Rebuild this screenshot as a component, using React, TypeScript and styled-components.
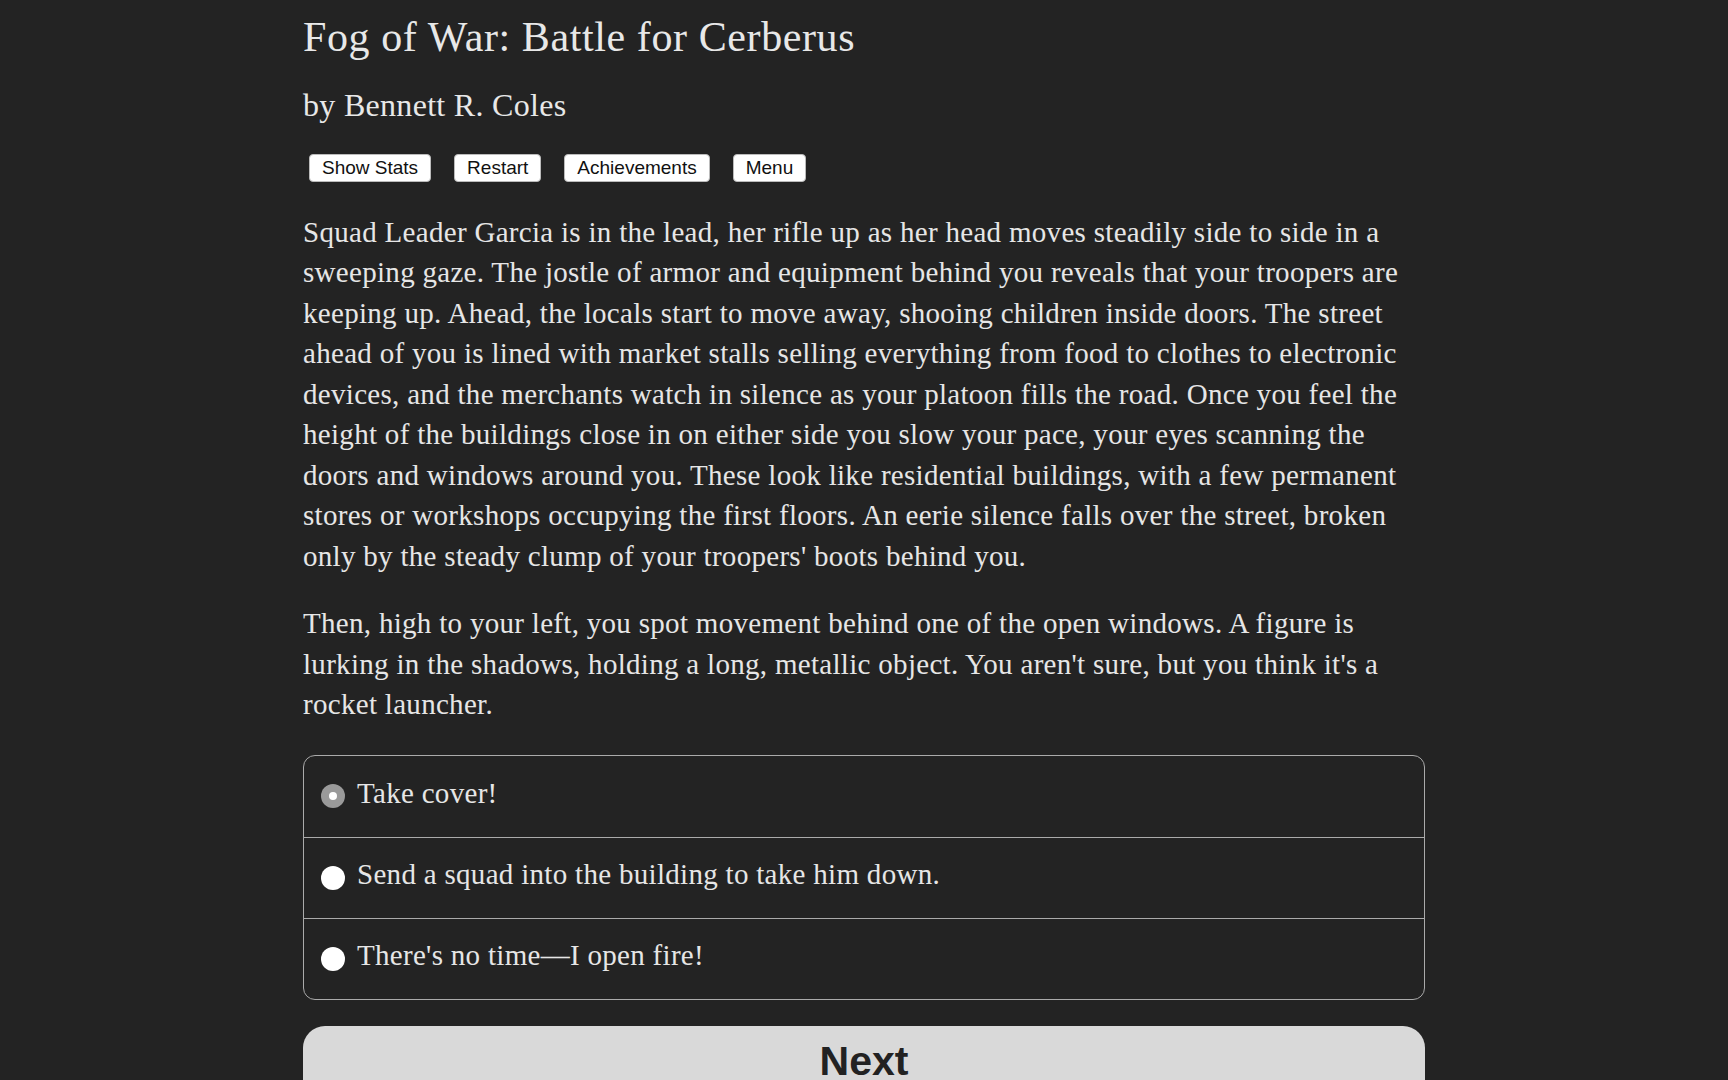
import React from "react";
import styled, { createGlobalStyle } from "styled-components";

const Global = createGlobalStyle`
  html, body { margin: 0; padding: 0; background: #232323; }
  body { font-family: "Liberation Serif", "DejaVu Serif", serif; color: #e6e6e6; }
`;

const Page = styled.main`
  width: 1122px;
  margin: 0 auto;
  padding-top: 12px;
`;

const Title = styled.h1`
  font-size: 42px;
  letter-spacing: 0.6px;
  font-weight: normal;
  line-height: 1.2;
  margin: 0;
  color: #e8e8e8;
`;

const Author = styled.h2`
  font-size: 32px;
  letter-spacing: 0.3px;
  font-weight: normal;
  line-height: 1.2;
  margin: 24px 0 0;
  color: #e8e8e8;
`;

const Toolbar = styled.div`
  display: flex;
  gap: 23px;
  margin: 29px 0 0 6px;
`;

const ToolButton = styled.button`
  font-family: "Liberation Sans", Arial, sans-serif;
  font-size: 19px;
  height: 28px;
  padding: 0 12px;
  background: #fff;
  color: #111;
  border: 1px solid #bbb;
  border-radius: 4px;
`;

const Story = styled.div`
  margin-top: 30px;
`;

const Text = styled.p`
  font-size: 29px;
  letter-spacing: 0.3px;
  line-height: 40.5px;
  margin: 0 0 27px;
`;

const Choices = styled.div`
  margin-top: 30px;
  border: 1.5px solid #aaa;
  border-radius: 12px;
  overflow: hidden;
`;

const Choice = styled.label<{ $first?: boolean }>`
  display: flex;
  align-items: center;
  height: 81px;
  padding: 0 16px 0 17px;
  gap: 12px;
  font-size: 29px;
  letter-spacing: 0.3px;
  border-top: ${(p) => (p.$first ? "none" : "1.5px solid #aaa")};
  box-sizing: border-box;
`;

const Radio = styled.span<{ $checked?: boolean }>`
  width: 24px;
  height: 24px;
  border-radius: 50%;
  flex: none;
  background: ${(p) => (p.$checked ? "#9a9a9a" : "#fff")};
  display: flex;
  align-items: center;
  justify-content: center;
  &::after {
    content: "";
    width: 8px;
    height: 8px;
    border-radius: 50%;
    background: #fff;
    display: ${(p) => (p.$checked ? "block" : "none")};
  }
`;

const ChoiceText = styled.span`
  margin-top: -6px;
`;

const NextButton = styled.button`
  display: block;
  width: 100%;
  margin-top: 26px;
  height: 80px;
  background: #d9d9d9;
  border: none;
  border-radius: 22px;
  font-family: "Liberation Sans", Arial, sans-serif;
  font-weight: bold;
  font-size: 41px;
  color: #222;
  padding: 0 0 8px;
`;

export default function App() {
  return (
    <>
      <Global />
      <Page>
        <Title>Fog of War: Battle for Cerberus</Title>
        <Author>by Bennett R. Coles</Author>
        <Toolbar>
          <ToolButton>Show Stats</ToolButton>
          <ToolButton>Restart</ToolButton>
          <ToolButton>Achievements</ToolButton>
          <ToolButton>Menu</ToolButton>
        </Toolbar>
        <Story>
          <Text>
            Squad Leader Garcia is in the lead, her rifle up as her head moves steadily side to side in a sweeping gaze. The jostle of armor and equipment behind you reveals that your troopers are keeping up. Ahead, the locals start to move away, shooing children inside doors. The street ahead of you is lined with market stalls selling everything from food to clothes to electronic devices, and the merchants watch in silence as your platoon fills the road. Once you feel the height of the buildings close in on either side you slow your pace, your eyes scanning the doors and windows around you. These look like residential buildings, with a few permanent stores or workshops occupying the first floors. An eerie silence falls over the street, broken only by the steady clump of your troopers' boots behind you.
          </Text>
          <Text>
            Then, high to your left, you spot movement behind one of the open windows. A figure is lurking in the shadows, holding a long, metallic object. You aren't sure, but you think it's a rocket launcher.
          </Text>
        </Story>
        <Choices>
          <Choice $first>
            <Radio $checked />
            <ChoiceText>Take cover!</ChoiceText>
          </Choice>
          <Choice>
            <Radio />
            <ChoiceText>Send a squad into the building to take him down.</ChoiceText>
          </Choice>
          <Choice>
            <Radio />
            <ChoiceText>There's no time—I open fire!</ChoiceText>
          </Choice>
        </Choices>
        <NextButton>Next</NextButton>
      </Page>
    </>
  );
}
